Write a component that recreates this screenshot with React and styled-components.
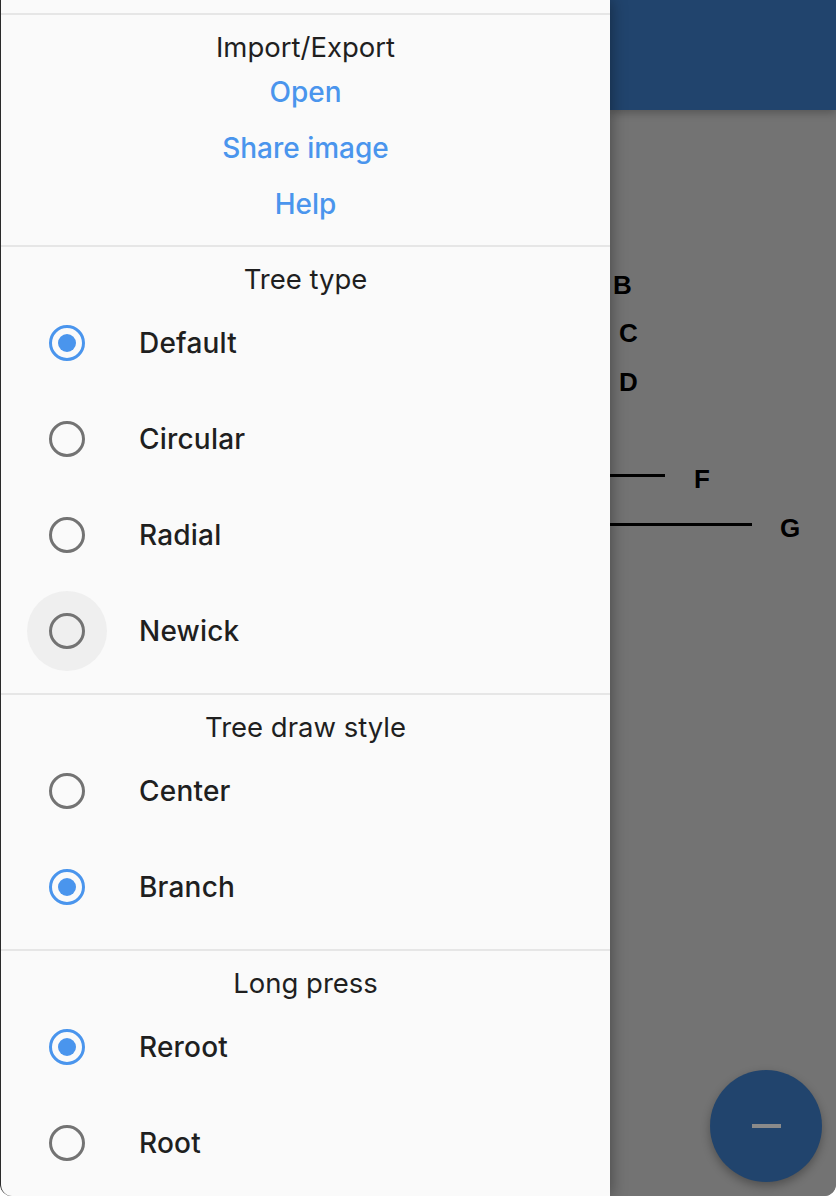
import styled, { createGlobalStyle } from "styled-components";

const GlobalStyle = createGlobalStyle`
  html, body {
    margin: 0;
    padding: 0;
    background: #ffffff;
  }
  body {
    font-family: Inter, "Noto Sans", sans-serif;
  }
`;

const Window = styled.div`
  display: flex;
  width: 836px;
  height: 1196px;
  overflow: hidden;
  border-left: 1px solid #2a2a2a;
  border-radius: 0 0 12px 12px;
  box-sizing: border-box;
  background: #737373;
`;

const Drawer = styled.nav`
  position: relative;
  z-index: 2;
  width: 609px;
  flex-shrink: 0;
  background: #fafafa;
  padding-top: 13px;
  box-shadow: 2px 0 14px rgba(0, 0, 0, 0.35);
`;

const Section = styled.section`
  border-top: 2px solid #e6e6e6;
  padding-bottom: 14px;
`;

const SectionTitle = styled.div`
  padding-top: 17px;
  height: 31px;
  line-height: 31px;
  text-align: center;
  font-size: 27.5px;
  font-weight: 400;
  color: #1f1f1f;
`;

const LinkButton = styled.div`
  height: 56px;
  padding-top: 1px;
  box-sizing: border-box;
  display: flex;
  align-items: center;
  justify-content: center;
  font-size: 28px;
  font-weight: 500;
  color: #4a95ed;
`;

const OptionRow = styled.label`
  height: 96px;
  display: flex;
  align-items: center;
  padding-left: 26px;
`;

const RadioHit = styled.span`
  width: 80px;
  height: 80px;
  border-radius: 50%;
  display: flex;
  align-items: center;
  justify-content: center;
  background: ${(p) => (p.$hover ? "#efefef" : "transparent")};
`;

const RadioRing = styled.span`
  width: 36px;
  height: 36px;
  box-sizing: border-box;
  border-radius: 50%;
  border: 3.5px solid ${(p) => (p.$checked ? "#4a95ed" : "#737373")};
  display: flex;
  align-items: center;
  justify-content: center;
  &::after {
    content: "";
    width: 18px;
    height: 18px;
    border-radius: 50%;
    background: ${(p) => (p.$checked ? "#4a95ed" : "transparent")};
  }
`;

const OptionLabel = styled.span`
  margin-left: 32px;
  font-size: 28px;
  font-weight: 500;
  letter-spacing: 0.2px;
  color: #1f1f1f;
`;

const Main = styled.main`
  flex: 1;
  display: flex;
  flex-direction: column;
  position: relative;
`;

const AppBar = styled.header`
  height: 110px;
  background: #21446d;
  box-shadow: 0 3px 8px rgba(0, 0, 0, 0.25);
  position: relative;
  z-index: 1;
`;

const Canvas = styled.div`
  flex: 1;
  position: relative;
  background: #737373;
`;

const Leaf = styled.span`
  position: absolute;
  font-family: "Liberation Sans", Arial, sans-serif;
  font-weight: 700;
  font-size: 26px;
  line-height: 1;
  color: #000;
`;

const Branch = styled.div`
  position: absolute;
  left: 0;
  height: 3px;
  background: #000;
`;

const Fab = styled.button`
  position: absolute;
  right: 14px;
  bottom: 14px;
  width: 112px;
  height: 112px;
  border-radius: 50%;
  border: none;
  background: #21446d;
  box-shadow: 0 4px 10px rgba(0, 0, 0, 0.3);
  display: flex;
  align-items: center;
  justify-content: center;
  &::before {
    content: "";
    width: 29px;
    height: 4px;
    background: #8a8a8a;
  }
`;

const sections = [
  {
    title: "Tree type",
    options: [
      { label: "Default", checked: true },
      { label: "Circular" },
      { label: "Radial" },
      { label: "Newick", hover: true },
    ],
  },
  {
    title: "Tree draw style",
    options: [{ label: "Center" }, { label: "Branch", checked: true }],
  },
  {
    title: "Long press",
    options: [{ label: "Reroot", checked: true }, { label: "Root" }],
  },
];

const leaves = [
  { name: "B", x: 3, y: 162 },
  { name: "C", x: 9, y: 210 },
  { name: "D", x: 9, y: 259 },
  { name: "F", x: 84, y: 356 },
  { name: "G", x: 170, y: 405 },
];

export default function App() {
  return (
    <>
      <GlobalStyle />
      <Window>
        <Drawer>
          <Section>
            <SectionTitle>Import/Export</SectionTitle>
            <LinkButton>Open</LinkButton>
            <LinkButton>Share image</LinkButton>
            <LinkButton>Help</LinkButton>
          </Section>
          {sections.map((s) => (
            <Section key={s.title}>
              <SectionTitle>{s.title}</SectionTitle>
              {s.options.map((o) => (
                <OptionRow key={o.label}>
                  <RadioHit $hover={o.hover}>
                    <RadioRing $checked={o.checked} />
                  </RadioHit>
                  <OptionLabel>{o.label}</OptionLabel>
                </OptionRow>
              ))}
            </Section>
          ))}
        </Drawer>
        <Main>
          <AppBar />
          <Canvas>
            {leaves.map((l) => (
              <Leaf key={l.name} style={{ left: l.x, top: l.y }}>
                {l.name}
              </Leaf>
            ))}
            <Branch style={{ top: 364, width: 55 }} />
            <Branch style={{ top: 413, width: 142 }} />
          </Canvas>
          <Fab aria-label="Zoom out" />
        </Main>
      </Window>
    </>
  );
}
